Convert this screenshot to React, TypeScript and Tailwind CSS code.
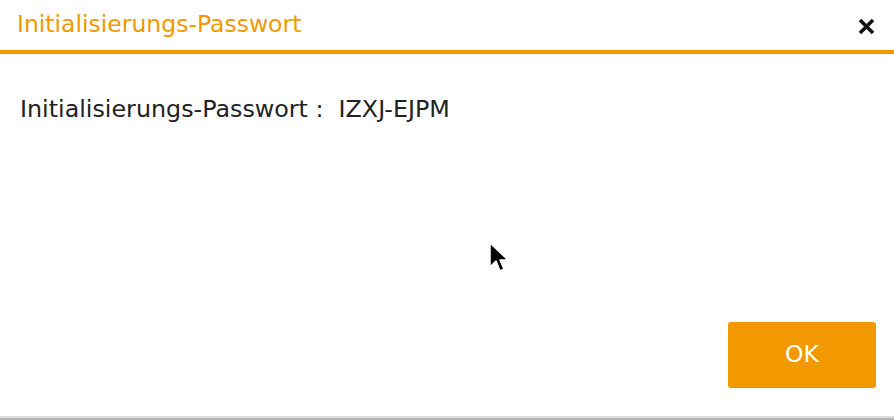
import React from "react"

export default function App() {
  return (
    <div
      className="w-[894px] h-[420px] flex flex-col bg-white overflow-hidden relative"
      style={{ fontFamily: '"DejaVu Sans", "Noto Sans", sans-serif' }}
    >
      {/* Header */}
      <div className="flex items-center justify-between h-[54px] pl-[17px] pr-[19px] border-b-4 border-[#f29800]">
        <span className="text-[23.5px] leading-none text-[#f29800]">Initialisierungs-Passwort</span>
        <svg width="17" height="17" viewBox="0 0 17 17" className="mt-[2px]">
          <path d="M2 2 L15 15 M15 2 L2 15" stroke="#111" strokeWidth="3.6" />
        </svg>
      </div>

      {/* Body */}
      <div className="flex-1 flex flex-col px-[20px]">
        <div className="flex items-center mt-[44px] text-[23.8px] leading-none text-[#222]">
          <span>Initialisierungs-Passwort :</span>
          <span className="ml-[15px]">IZXJ-EJPM</span>
        </div>
        <div className="flex-1" />
        <div className="flex justify-end mr-[-2px] mb-[28px]">
          <button className="w-[148px] h-[66px] rounded-[3px] bg-[#f29800] text-white text-[23.5px]">OK</button>
        </div>
      </div>

      {/* bottom edge */}
      <div className="h-[2px] bg-[#dcdcdc]" />
      <div className="h-[2px] bg-[#b4b4b4]" />

      {/* mouse pointer */}
      <svg className="absolute left-[488px] top-[242px]" width="24" height="34" viewBox="0 0 24 34">
        <path d="M2 1 L2 25 L8 19 L12 29 L16 27 L12 18 L20 18 Z" fill="#000" stroke="#fff" strokeWidth="1.5" strokeLinejoin="round" />
      </svg>
    </div>
  )
}
